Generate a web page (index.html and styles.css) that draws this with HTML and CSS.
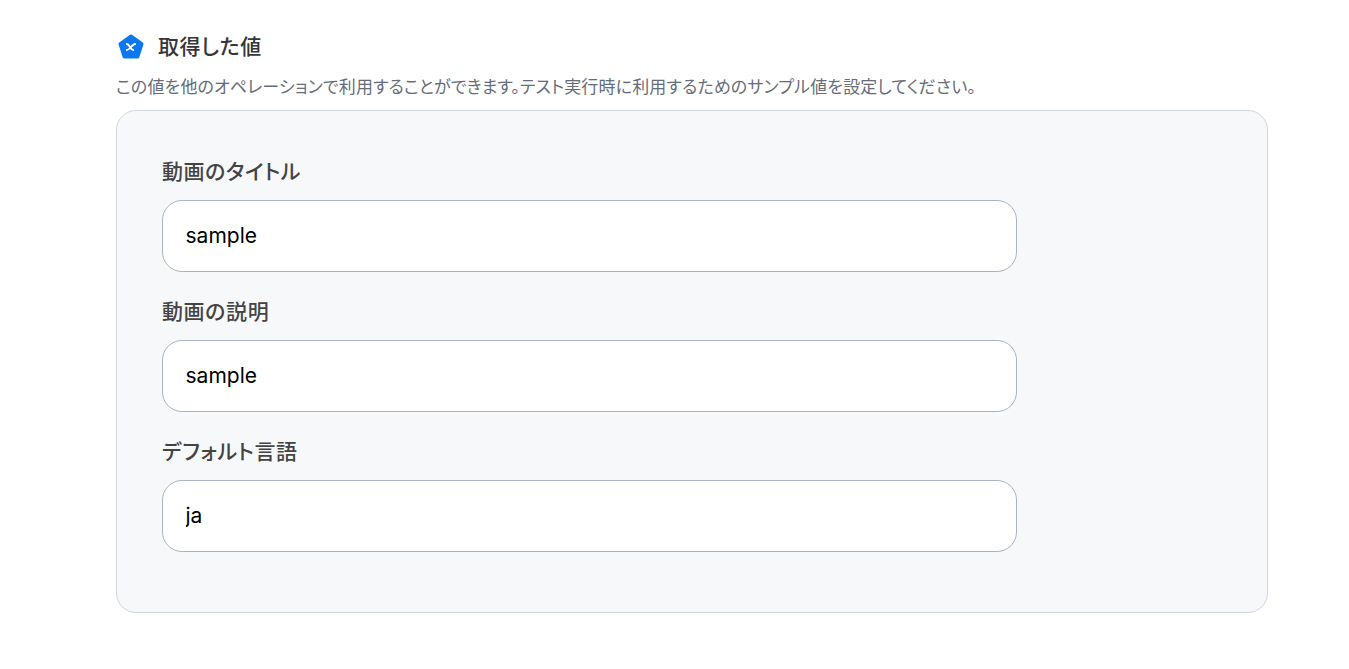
FILE: index.html
```html
<!DOCTYPE html>
<html lang="ja">
  <head>
    <meta charset="UTF-8" />
    <title>取得した値</title>
    <link rel="stylesheet" href="styles.css">
  </head>
  <body>
    <section class="outputs">
      <div class="outputs-head">
        <svg class="outputs-icon" viewBox="0 0 26 26" width="26" height="26" aria-hidden="true">
          <path class="icon-base" d="M13 2.2 L23.8 10 L19.7 22.8 L6.3 22.8 L2.2 10 Z" />
          <path class="icon-x" d="M8.8 10 C11.6 10 12.4 16 15.2 16 M17.2 10 C14.4 10 11.6 16 8.8 16" />
        </svg>
        <h2>取得した値</h2>
      </div>
      <p class="outputs-note">この値を他のオペレーションで利用することができます。テスト実行時に利用するためのサンプル値を設定してください。</p>
      <div class="outputs-panel">
        <div class="field">
          <label for="title">動画のタイトル</label>
          <input type="text" id="title" value="sample" />
        </div>
        <div class="field">
          <label for="description">動画の説明</label>
          <input type="text" id="description" value="sample" />
        </div>
        <div class="field">
          <label for="language">デフォルト言語</label>
          <input type="text" id="language" value="ja" />
        </div>
      </div>
    </section>
  </body>
</html>
```

FILE: styles.css
```css
body {
  font-family: Inter, "Noto Sans CJK JP", sans-serif;
  font-feature-settings: "palt";
  margin: 0;
  background: #fff;
  color: #333;
}
.outputs {
  width: 1152px;
  margin-left: 116px;
  padding-top: 34px;
}
.outputs-head {
  display: flex;
  align-items: center;
  gap: 14px;
  margin-left: 2px;
  height: 26px;
}
.outputs-icon {
  flex: none;
}
.icon-base {
  fill: #0b78f0;
  stroke: #0b78f0;
  stroke-width: 3.4;
  stroke-linejoin: round;
}
.icon-x {
  fill: none;
  stroke: #fff;
  stroke-width: 1.8;
  stroke-linecap: round;
}
.outputs-head h2 {
  margin: 0;
  font-size: 21px;
  font-weight: 500;
  letter-spacing: 0.6px;
  line-height: 26px;
  color: #33363b;
}
.outputs-note {
  margin: 16px 0 12px;
  font-size: 17px;
  letter-spacing: 0.15px;
  line-height: 22px;
  color: #666d79;
}
.outputs-panel {
  padding: 47px 45px 60px;
  background: #f7f8fa;
  border: 1px solid #cfd5de;
  border-radius: 20px;
  display: flex;
  flex-direction: column;
  gap: 26px;
}
.field {
  display: flex;
  flex-direction: column;
  gap: 14px;
}
.field label {
  font-size: 21px;
  font-weight: 500;
  letter-spacing: 0.6px;
  line-height: 28px;
  height: 28px;
  color: #444;
}
.field input {
  box-sizing: border-box;
  width: 855px;
  height: 72px;
  padding: 0 22.5px 2px;
  font-family: inherit;
  font-size: 21px;
  color: #000;
  background: #fff;
  border: 1px solid #a9b3c2;
  border-radius: 20px;
  outline: none;
}
```
